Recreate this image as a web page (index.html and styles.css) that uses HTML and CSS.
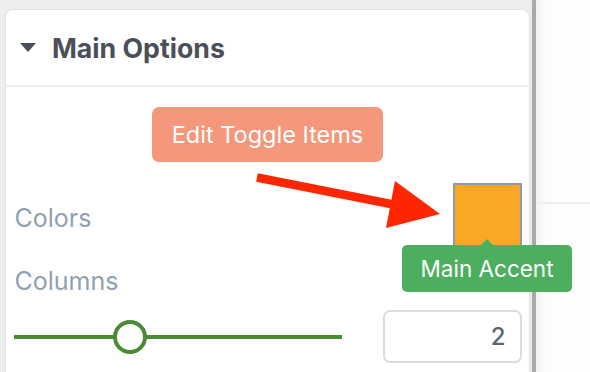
FILE: index.html
```html
<!DOCTYPE html>
<html>
<head>
<meta charset="utf-8">
<link rel="stylesheet" href="styles.css">
</head>
<body>
<div class="page">
  <div class="panel">
    <div class="card">
      <div class="card-head">
        <span class="caret"></span>
        <h2 class="title">Main Options</h2>
      </div>
      <div class="card-body">
        <div class="btn-row"><button class="btn">Edit Toggle Items</button></div>
        <div class="colors-row">
          <span class="label">Colors</span>
          <div class="swatch-wrap">
            <div class="swatch"></div>
            <div class="tooltip">Main Accent</div>
          </div>
        </div>
        <div class="label label-columns">Columns</div>
        <div class="slider-row">
          <div class="slider">
            <div class="track"></div>
            <div class="thumb"></div>
          </div>
          <div class="num">2</div>
        </div>
      </div>
    </div>
  </div>
  <div class="side"><div class="side-line"></div></div>
  <svg class="arrow" width="590" height="372" viewBox="0 0 590 372">
    <line x1="257" y1="177.5" x2="396" y2="205" stroke="#ff2600" stroke-width="8.5"/>
    <polygon points="395,181 440,214 386,228" fill="#ff2600"/>
  </svg>
</div>
</body>
</html>
```
FILE: styles.css
```css
* { box-sizing: border-box; }
html, body { margin: 0; padding: 0; }
body {
  font-family: Inter, "Open Sans", sans-serif;
  background: #eceeed;
}
.page {
  position: relative;
  display: flex;
  width: 590px;
  height: 372px;
  overflow: hidden;
}
.panel {
  width: 536px;
  flex: none;
  padding: 9px 2px 0 5px;
  border-right: 4px solid #a9a9a9;
  display: flex;
}
.card {
  flex: 1;
  background: #fff;
  border: 1.5px solid #dde5e4;
  border-bottom: none;
  border-radius: 8px 8px 0 0;
}
.card-head {
  height: 77px;
  display: flex;
  align-items: center;
  padding-left: 14px;
  border-bottom: 2px solid #eef0f0;
}
.caret {
  width: 0;
  height: 0;
  border-left: 8px solid transparent;
  border-right: 8px solid transparent;
  border-top: 9.5px solid #4a4f5a;
  margin-right: 16px;
}
.title {
  margin: 0;
  font-size: 26.7px;
  font-weight: 700;
  color: #4a4f5a;
}
.card-body {
  padding: 0 7.5px 0 7.5px;
}
.btn-row {
  display: flex;
  justify-content: center;
  padding-top: 20px;
}
.btn {
  height: 55px;
  padding: 0 20px;
  border: none;
  border-radius: 7px;
  background: #f5977b;
  color: #fff;
  font-family: inherit;
  font-size: 23.5px;
}
.colors-row {
  display: flex;
  justify-content: space-between;
  align-items: center;
  margin-top: 21px;
}
.label {
  font-size: 25px;
  line-height: 30px;
  color: #8fa1b2;
  padding-left: 1px;
}
.swatch-wrap {
  position: relative;
  width: 69px;
  height: 69px;
}
.swatch {
  width: 69px;
  height: 69px;
  background: #f9a825;
  border: 2px solid #8d9aa8;
}
.tooltip {
  position: absolute;
  top: 62px;
  left: 50%;
  transform: translateX(-50%);
  width: 170px;
  height: 47px;
  border-radius: 5px;
  background: #4caf5e;
  color: #fff;
  font-size: 22.5px;
  display: flex;
  align-items: center;
  justify-content: center;
}
.tooltip::before {
  content: "";
  position: absolute;
  top: -6px;
  left: 50%;
  margin-left: -6px;
  border-left: 6px solid transparent;
  border-right: 6px solid transparent;
  border-bottom: 6px solid #4caf5e;
}
.label-columns {
  margin-top: 14px;
}
.slider-row {
  display: flex;
  justify-content: space-between;
  align-items: center;
  margin-top: 14px;
}
.slider {
  position: relative;
  width: 328px;
  height: 34px;
  margin-left: 0.5px;
  display: flex;
  align-items: center;
}
.track {
  width: 100%;
  height: 4px;
  background: #4b8b36;
}
.thumb {
  position: absolute;
  left: 99px;
  top: 0;
  width: 34px;
  height: 34px;
  border-radius: 50%;
  border: 4px solid #4b8b36;
  background: #fff;
}
.num {
  width: 139px;
  height: 53px;
  border: 2px solid #d8dde2;
  border-radius: 7px;
  display: flex;
  align-items: center;
  justify-content: flex-end;
  padding-right: 14px;
  font-size: 24px;
  font-weight: 500;
  color: #5e6670;
}
.side {
  flex: 1;
  background: #fdfdfd;
  box-shadow: inset 10px 0 8px -6px rgba(0,0,0,0.06);
}
.side-line {
  margin-top: 202px;
  height: 2px;
  background: #eeeeee;
}
.arrow {
  position: absolute;
  left: 0;
  top: 0;
  pointer-events: none;
}
```
